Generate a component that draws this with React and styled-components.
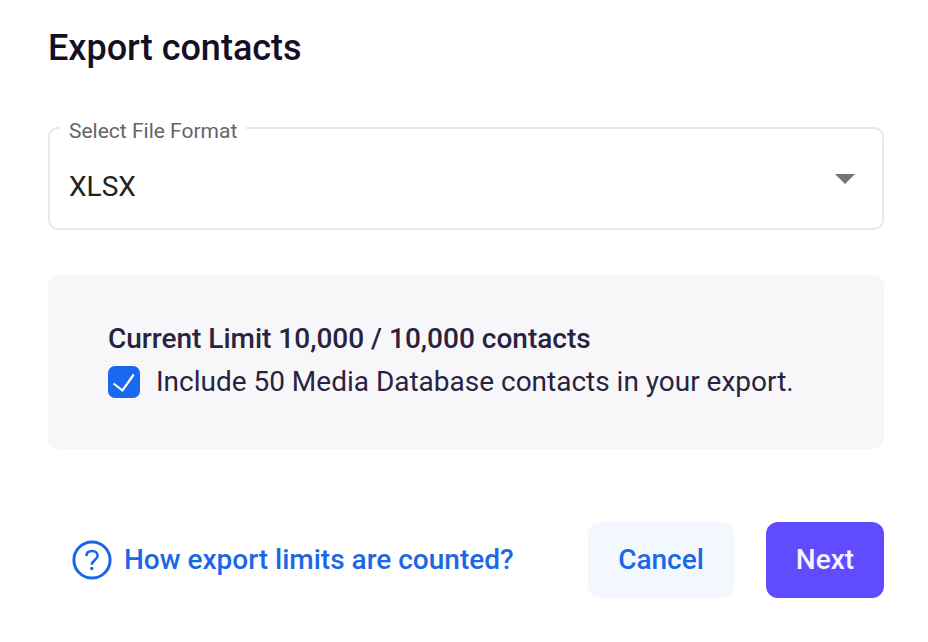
import React, { useState } from "react";
import styled, { createGlobalStyle } from "styled-components";

const GlobalStyle = createGlobalStyle`
  * {
    box-sizing: border-box;
  }

  body {
    margin: 0;
    background: #fff;
    font-family: Roboto, "Liberation Sans", sans-serif;
  }
`;

const Dialog = styled.div`
  display: flex;
  flex-direction: column;
  width: 928px;
  height: 642px;
  padding: 24px 44px 44px 48px;
`;

const Title = styled.h1`
  margin: 0;
  font-size: 36px;
  line-height: 48px;
  font-weight: 500;
  color: #150f26;
`;

const Field = styled.fieldset`
  height: 117px;
  margin: 41px 0 0;
  padding: 0 27px 0 19px;
  border: 2px solid #e4eaeb;
  border-radius: 10px;
`;

const Legend = styled.legend`
  padding: 6px 9px 0;
  margin-left: -9px;
  font-size: 21px;
  line-height: 24px;
  color: #666;
`;

const Select = styled.div`
  display: flex;
  align-items: center;
  justify-content: space-between;
  height: 86px;

  svg {
    margin-bottom: 14px;
  }
`;

const Value = styled.span`
  padding-top: 2px;
  font-size: 28px;
  line-height: 32px;
  color: #222;
`;

const Panel = styled.div`
  height: 174px;
  margin-top: 45px;
  padding: 44px 60px;
  border-radius: 10px;
  background: #f7f7fa;
  color: #29233f;
`;

const Limit = styled.div`
  font-size: 28px;
  line-height: 40px;
  font-weight: 500;
`;

const CheckRow = styled.label`
  display: flex;
  align-items: center;
  gap: 16px;
  margin-top: 3px;
  font-size: 28px;
  line-height: 40px;
  letter-spacing: -0.01px;
  white-space: nowrap;
`;

const Box = styled.svg`
  flex: none;
`;

const Footer = styled.div`
  display: flex;
  align-items: center;
  height: 76px;
  margin-top: 73px;
`;

const HelpLink = styled.a`
  display: flex;
  align-items: center;
  gap: 12px;
  margin: 0 auto 0 24px;
  font-size: 28px;
  font-weight: 500;
  color: #1b68e6;
  white-space: nowrap;

  span {
    padding-bottom: 2px;
  }
`;

const Button = styled.button`
  width: ${(props) => props.$width}px;
  height: 76px;
  margin-left: 32px;
  padding: 0 0 2px;
  border: none;
  border-radius: 12px;
  background: ${(props) => (props.$primary ? "#614bff" : "#f3f8ff")};
  color: ${(props) => (props.$primary ? "#f5f3ff" : "#1b68e6")};
  font-family: inherit;
  font-size: 28px;
  font-weight: 500;
`;

const App = () => {
  const [included, setIncluded] = useState(true);

  return (
    <Dialog>
      <GlobalStyle />
      <Title>Export contacts</Title>

      <Field>
        <Legend>Select File Format</Legend>
        <Select>
          <Value>XLSX</Value>
          <svg width="20" height="10" viewBox="0 0 20 10">
            <path d="M0 0h20L10 10z" fill="#757575" />
          </svg>
        </Select>
      </Field>

      <Panel>
        <Limit>Current Limit 10,000 / 10,000 contacts</Limit>
        <CheckRow onClick={() => setIncluded(!included)}>
          <Box width="32" height="32" viewBox="0 0 32 32">
            <rect width="32" height="32" rx="7" fill="#1b68f0" />
            {included && <path d="M5.500 17.500L14.500 24.500L25.700 8.500" fill="none" stroke="#fff" strokeWidth="2.200" />}
          </Box>
          <span>Include 50 Media Database contacts in your export.</span>
        </CheckRow>
      </Panel>

      <Footer>
        <HelpLink>
          <svg width="40" height="40" viewBox="0 0 40 40" fill="none" stroke="#1b68e6">
            <circle cx="20" cy="20" r="18.100" strokeWidth="3" />
            <path d="M14.500 16C14.500 12.700 16.700 11 20 11s5.600 2 5.600 4.700c0 4.300-5.800 4.300-5.800 9" strokeWidth="2.600" />
            <circle cx="19.800" cy="28.500" r="1.700" fill="#1b68e6" stroke="none" />
          </svg>
          <span>How export limits are counted?</span>
        </HelpLink>
        <Button $width={146}>Cancel</Button>
        <Button $width={118} $primary>Next</Button>
      </Footer>
    </Dialog>
  );
};

export default App;
